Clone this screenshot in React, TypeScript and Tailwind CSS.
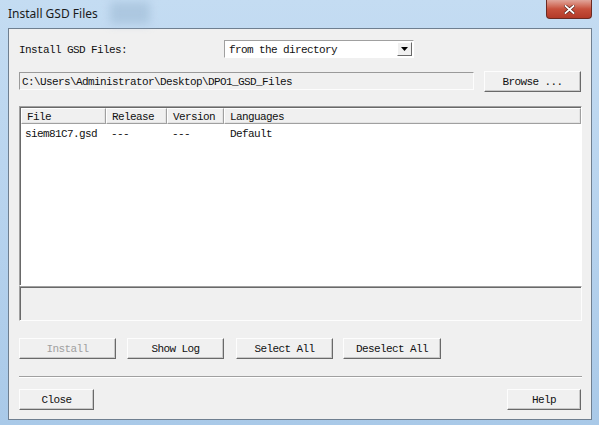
import React from "react";

const mono = { fontFamily: '"Liberation Mono", "DejaVu Sans Mono", monospace' };

function Btn({ label, w, disabled }: { label: string; w: string; disabled?: boolean }) {
  return (
    <div
      className={`${w} h-[21px] flex items-center justify-center pt-[2px] bg-[#f0f0f0] border border-t-[#fdfdfd] border-l-[#fdfdfd] border-r-[#696969] border-b-[#696969] shadow-[inset_-1px_-1px_0_#c8c8c8] text-[11px] tracking-[-0.6px] ${
        disabled ? "text-[#a0a0a0]" : "text-[#111]"
      }`}
      style={mono}
    >
      {label}
    </div>
  );
}

export default function App() {
  return (
    <div className="w-[599px] h-[425px] relative overflow-hidden bg-gradient-to-b from-[#c4dcf2] via-[#b7d3ee] to-[#a9c9e8]">
      {/* Title bar */}
      <div className="h-[28px] flex items-start relative">
        <div className="absolute left-[110px] top-[2px] w-[40px] h-[22px] bg-[#a3bfd9] blur-[5px] opacity-70" />
        <span
          className="relative ml-[8px] mt-[6px] text-[12px] text-[#1a1a1a] leading-[16px]"
          style={{ fontFamily: '"Noto Sans", "Open Sans", sans-serif' }}
        >
          Install GSD Files
        </span>
        <div className="absolute left-[546px] top-0 w-[46px] h-[19px] rounded-b-[4px] border border-[#6b2a22] border-t-0 bg-gradient-to-b from-[#e0a59a] via-[#c7503c] to-[#b33a28] flex items-center justify-center">
          <svg width="11" height="9" viewBox="0 0 11 9">
            <path d="M1.5 1 L9.5 8 M9.5 1 L1.5 8" stroke="#5a2018" strokeWidth="3.2" strokeLinecap="square" />
            <path d="M1.5 1 L9.5 8 M9.5 1 L1.5 8" stroke="#ffffff" strokeWidth="1.8" strokeLinecap="square" />
          </svg>
        </div>
      </div>

      {/* Client area */}
      <div className="mx-[8px] w-[584px] h-[392px] bg-[#f0f0f0] border border-[#6f7f90] flex flex-col pl-[10px] pr-[10px] text-[#111]" style={mono}>
        {/* Row 1 */}
        <div className="mt-[11px] h-[18px] flex items-center">
          <span className="relative top-[1px] text-[11px] tracking-[-0.6px] w-[205px]">Install GSD Files:</span>
          <div className="w-[190px] h-[18px] bg-white border border-t-[#a0a0a0] border-l-[#a0a0a0] border-r-[#fff] border-b-[#fff] flex items-center">
            <span className="relative top-[1px] flex-1 pl-[4px] text-[11px] tracking-[-0.6px]">from the directory</span>
            <div className="w-[15px] h-[14px] mr-[1px] bg-[#f0f0f0] border border-t-[#fff] border-l-[#fff] border-r-[#696969] border-b-[#696969] flex items-center justify-center">
              <svg width="7" height="4" viewBox="0 0 7 4">
                <path d="M0 0 H7 L3.5 4 Z" fill="#000" />
              </svg>
            </div>
          </div>
        </div>

        {/* Row 2 */}
        <div className="mt-[13px] h-[20px] flex items-center">
          <div className="w-[455px] h-[18px] bg-[#f0f0f0] border border-t-[#9a9a9a] border-l-[#9a9a9a] border-r-[#fdfdfd] border-b-[#fdfdfd] flex items-center">
            <span className="relative top-[1px] pl-[2px] text-[11px] tracking-[-0.6px]">C:\Users\Administrator\Desktop\DPO1_GSD_Files</span>
          </div>
          <div className="ml-[10px]">
            <Btn label="Browse ..." w="w-[97px]" />
          </div>
        </div>

        {/* List */}
        <div className="mt-[15px] h-[180px] w-[563px] bg-white border border-t-[#a0a0a0] border-l-[#a0a0a0] border-r-[#fff] border-b-[#fff] shadow-[inset_1px_1px_0_#696969] flex flex-col pl-[1px] pt-[1px]">
          <div className="h-[16px] flex text-[11px] tracking-[-0.6px]">
            {[
              ["File", "w-[85px]"],
              ["Release", "w-[61px]"],
              ["Version", "w-[57px]"],
              ["Languages", "flex-1"],
            ].map(([t, w]) => (
              <div
                key={t}
                className={`${w} h-[16px] bg-[#f0f0f0] border border-t-[#fff] border-l-[#fff] border-r-[#a0a0a0] border-b-[#a0a0a0] shadow-[inset_-1px_-1px_0_#e3e3e3] flex items-center pl-[5px] pt-[2px]`}
              >
                {t}
              </div>
            ))}
          </div>
          <div className="h-[18px] flex items-center pt-[2px] text-[11px] tracking-[-0.6px]">
            <span className="w-[85px] pl-[4px]">siem81C7.gsd</span>
            <span className="w-[61px] pl-[5px]">---</span>
            <span className="w-[57px] pl-[5px]">---</span>
            <span className="pl-[6px]">Default</span>
          </div>
        </div>

        {/* Status box */}
        <div className="h-[35px] w-[563px] bg-[#f0f0f0] border border-t-[#a0a0a0] border-l-[#a0a0a0] border-r-[#fdfdfd] border-b-[#fdfdfd] shadow-[inset_1px_1px_0_#696969]" />

        {/* Buttons */}
        <div className="mt-[17px] h-[21px] flex">
          <Btn label="Install" w="w-[97px]" disabled />
          <div className="ml-[11px]">
            <Btn label="Show Log" w="w-[97px]" />
          </div>
          <div className="ml-[12px]">
            <Btn label="Select All" w="w-[97px]" />
          </div>
          <div className="ml-[10px]">
            <Btn label="Deselect All" w="w-[98px]" />
          </div>
        </div>

        {/* Separator */}
        <div className="mt-[17px] w-[563px] h-[2px] border-t border-t-[#a0a0a0] border-b border-b-[#fff]" />

        {/* Bottom buttons */}
        <div className="mt-[11px] h-[21px] flex justify-between w-[562px]">
          <Btn label="Close" w="w-[75px]" />
          <Btn label="Help" w="w-[74px]" />
        </div>
      </div>
    </div>
  );
}
